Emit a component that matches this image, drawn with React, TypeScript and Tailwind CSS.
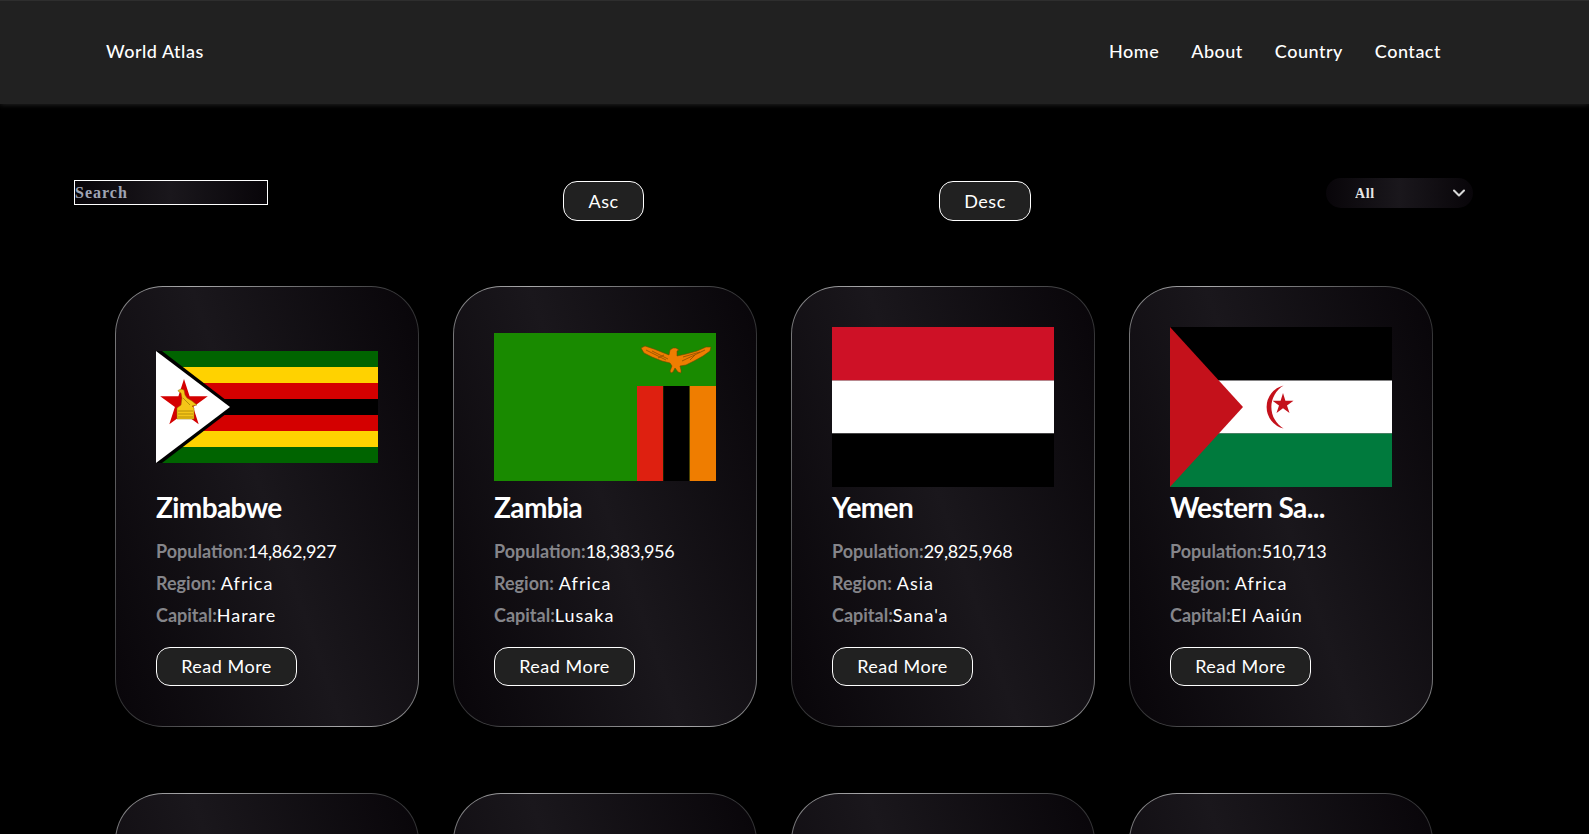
import { ChevronDown } from "lucide-react";

const ZimbabweFlag = () => (
    <svg viewBox="0 0 222 112" className="w-[222px] h-[112px]">
        <rect width="222" height="112" fill="#006400" />
        <rect y="16" width="222" height="80" fill="#ffd200" />
        <rect y="32" width="222" height="48" fill="#d40000" />
        <rect y="48" width="222" height="16" fill="#000" />
        <polygon points="0,0 6,0 79,56 6,112 0,112" fill="#000" />
        <polygon points="0,0 74,56 0,112" fill="#fff" />
        <polygon
            points="28,28 33.6,45.3 51.8,45.3 37.1,56 42.7,73.2 28,62.6 13.3,73.2 18.9,56 4.2,45.3 22.4,45.3"
            fill="#d40000"
        />
        <path
            d="M23 41 L22 39.5 L25 38 L28 39 L29 44 L31 47 L36 50 L41 54 L36 55 L38 57 L38 68 L21 68 L21 57 L25 54 L26 47 L25 42 Z"
            fill="#f5c518"
            stroke="#8a6d00"
            strokeWidth="0.5"
        />
        <path d="M22 60 H37 M22 63 H37 M22 66 H37 M27 47 L34 54" stroke="#8a6d00" strokeWidth="0.6" />
    </svg>
);

const ZambiaFlag = () => (
    <svg viewBox="0 0 222 148" className="w-[222px] h-[148px]">
        <rect width="222" height="148" fill="#198a00" />
        <rect x="143" y="53" width="26.3" height="95" fill="#de2010" />
        <rect x="169.3" y="53" width="26.4" height="95" fill="#000" />
        <rect x="195.7" y="53" width="26.3" height="95" fill="#ef7d00" />
        <path
            d="M147 15 L151 13 L160 16 L170 20 L175 22 L176 17 L179 15 L182 15 L185 17 L183 18 L183 23 L192 21 L203 18 L212 14 L217 14 L216 18 L209 23 L200 28 L192 32 L186 33 L187 37 L187 40 L184 39 L181 35 L179 39 L177 40 L176 38 L178 33 L176 30 L168 28 L158 24 L150 20 Z"
            fill="#ef7d00"
            stroke="#6b4a00"
            strokeWidth="0.6"
        />
        <path
            d="M152 17 L172 27 M158 18 L174 26 M164 25 L170 22 M188 28 L211 17 M189 24 L206 19 M196 27 L201 22"
            stroke="#8a4f00"
            strokeWidth="0.8"
        />
    </svg>
);

const YemenFlag = () => (
    <svg viewBox="0 0 222 160" className="w-[222px] h-[160px]">
        <rect width="222" height="53.5" fill="#ce1126" />
        <rect y="53.5" width="222" height="53" fill="#fff" />
        <rect y="106.5" width="222" height="53.5" fill="#000" />
    </svg>
);

const WesternSaharaFlag = () => (
    <svg viewBox="0 0 222 160" className="w-[222px] h-[160px]">
        <rect width="222" height="53.5" fill="#000" />
        <rect y="53.5" width="222" height="53" fill="#fff" />
        <rect y="106.5" width="222" height="53.5" fill="#007a3d" />
        <polygon points="0,0 73,80 0,160" fill="#c4111b" />
        <path d="M113.6 58.5 A22.1 22.1 0 0 0 113.6 101.5 A25 25 0 0 1 113.6 58.5 Z" fill="#c4111b" />
        <polygon
            points="113,66 115.4,73.7 123.5,73.7 117,78.4 119.5,86 113,81.3 106.5,86 109,78.4 102.5,73.7 110.6,73.7"
            fill="#c4111b"
        />
    </svg>
);

const countries = [
    { name: "Zimbabwe", flag: <ZimbabweFlag />, population: "14,862,927", region: "Africa", capital: "Harare" },
    { name: "Zambia", flag: <ZambiaFlag />, population: "18,383,956", region: "Africa", capital: "Lusaka" },
    { name: "Yemen", flag: <YemenFlag />, population: "29,825,968", region: "Asia", capital: "Sana'a" },
    { name: "Western Sa...", flag: <WesternSaharaFlag />, population: "510,713", region: "Africa", capital: "El Aaiún" },
];

const CardShell = ({ children }: { children?: React.ReactNode }) => (
    <div className="w-[304px] h-[441px] rounded-[48px] p-px bg-[linear-gradient(71deg,#2c2c2e,#a8a8aa,#2c2c2e)]">
        <div className="h-full rounded-[47px] p-10 bg-[linear-gradient(71deg,#080509,#1a171c,#080509)]">
            {children}
        </div>
    </div>
);

export default function App() {
    return (
        <div className="h-[834px] overflow-hidden bg-black text-white font-['Lato',sans-serif]">
            <header className="h-[104px] pb-[3px] border-t border-[#2e2e2e] bg-[#212121] shadow-[0_1px_5px_#212121] flex items-center justify-between pl-[106px] pr-[148px]">
                <span className="text-[18px] font-medium tracking-[0.5px]">World Atlas</span>
                <nav className="flex gap-8 text-[18px] font-medium tracking-[0.5px]">
                    <span>Home</span>
                    <span>About</span>
                    <span>Country</span>
                    <span>Contact</span>
                </nav>
            </header>

            <section className="flex items-start justify-between pt-[74px] pl-[74px] pr-[116px]">
                <input
                    placeholder="Search"
                    className="mt-[2px] w-[194px] h-[25px] border border-white bg-[linear-gradient(90deg,#080509,#1a171c,#080509)] text-[16px] font-bold tracking-[1px] font-['Liberation_Serif',serif] placeholder:text-[#a0a5b4] outline-none"
                />
                <button className="mt-[3px] w-[81px] h-[40px] rounded-[14px] border border-white bg-[#212121] text-[18px] tracking-[0.5px]">
                    Asc
                </button>
                <button className="mt-[3px] w-[92px] h-[40px] rounded-[14px] border border-white bg-[#212121] text-[18px] tracking-[0.5px]">
                    Desc
                </button>
                <div className="relative w-[147px] h-[30px]">
                    <select className="w-full h-full appearance-none rounded-full pl-[29px] bg-[linear-gradient(90deg,#080509,#1a171c,#080509)] text-[14px] font-bold tracking-[0.6px] text-[#e6e6e6] font-['Liberation_Serif',serif] outline-none">
                        <option>All</option>
                    </select>
                    <ChevronDown size={20} strokeWidth={2.5} className="absolute right-[4px] top-[5px] text-[#d8d8d8]" />
                </div>
            </section>

            <main className="grid grid-cols-[repeat(4,304px)] gap-x-[34px] gap-y-[66px] mt-[65px] pl-[115px]">
                {countries.map((country) => (
                    <CardShell key={country.name}>
                        <div className="h-[160px] flex items-center">{country.flag}</div>
                        <h2 className="mt-[2px] text-[28px] leading-[36px] font-bold tracking-[-0.6px]">{country.name}</h2>
                        <div className="mt-[10px] text-[18px] leading-[32px] tracking-[1px]">
                            <p>
                                <span className="font-bold text-[#85858a] tracking-[0px]">Population:</span>
                                <span className="tracking-[-0.3px]">{country.population}</span>
                            </p>
                            <p>
                                <span className="font-bold text-[#85858a] tracking-[0px]">Region:</span> {country.region}
                            </p>
                            <p>
                                <span className="font-bold text-[#85858a] tracking-[0px]">Capital:</span>
                                {country.capital}
                            </p>
                        </div>
                        <button className="mt-[16px] w-[141px] h-[39px] rounded-[14px] border border-white bg-[#212121] text-[18px] tracking-[0.5px]">
                            Read More
                        </button>
                    </CardShell>
                ))}
                <CardShell />
                <CardShell />
                <CardShell />
                <CardShell />
            </main>
        </div>
    );
}
